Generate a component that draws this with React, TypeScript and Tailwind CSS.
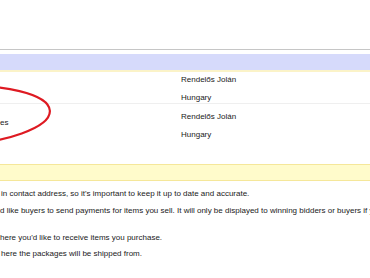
import React from "react";

export default function App() {
  const font = { fontFamily: '"Liberation Sans", Arial, sans-serif' };
  return (
    <div className="relative w-[370px] h-[278px] overflow-hidden bg-white text-[8px] text-[#1a1a1a]" style={font}>
      <div className="h-[49px]" />
      <div className="h-px bg-[#c6c6c6]" />
      <div className="h-[4px] bg-white" />
      <div className="h-[16px] bg-[#d6dafb]" />
      <div className="h-[2px] bg-[#fbf3c8]" />
      {/* row 1 */}
      <div className="flex h-[32px] border-b border-[#efefef]">
        <div className="w-[181px]" />
        <div className="flex flex-col gap-[4px] pt-[1px]">
          <div className="h-[14px] leading-[14px]">Rendelős Jolán</div>
          <div className="h-[14px] leading-[14px]">Hungary</div>
        </div>
      </div>
      {/* row 2 */}
      <div className="flex h-[40px] pt-[6px]">
        <div className="w-[181px] pt-[6px] leading-[14px]">es</div>
        <div className="flex flex-col gap-[4px]">
          <div className="h-[14px] leading-[14px]">Rendelős Jolán</div>
          <div className="h-[14px] leading-[14px]">Hungary</div>
        </div>
      </div>
      <div className="h-[20px]" />
      <div className="h-[17px] bg-[#fffbcb] border-y border-[#f5e79a]" />
      <div className="h-[6px]" />
      <div className="flex flex-col whitespace-nowrap">
        <div className="h-[14px] leading-[14px] pl-[1px]">in contact address, so it's important to keep it up to date and accurate.</div>
        <div className="h-[3px]" />
        <div className="h-[14px] leading-[14px]">d like buyers to send payments for items you sell. It will only be displayed to winning bidders or buyers if you</div>
        <div className="h-[13px]" />
        <div className="h-[14px] leading-[14px]">here you'd like to receive items you purchase.</div>
        <div className="h-[2px]" />
        <div className="h-[14px] leading-[14px] pl-[1px]">here the packages will be shipped from.</div>
      </div>
      <svg className="absolute left-0 top-0 pointer-events-none" width="370" height="278" viewBox="0 0 370 278">
        <ellipse cx="-50" cy="116" rx="100" ry="30" transform="rotate(-3 -50 116)" fill="none" stroke="#de1a22" strokeWidth="2.2" />
      </svg>
    </div>
  );
}
